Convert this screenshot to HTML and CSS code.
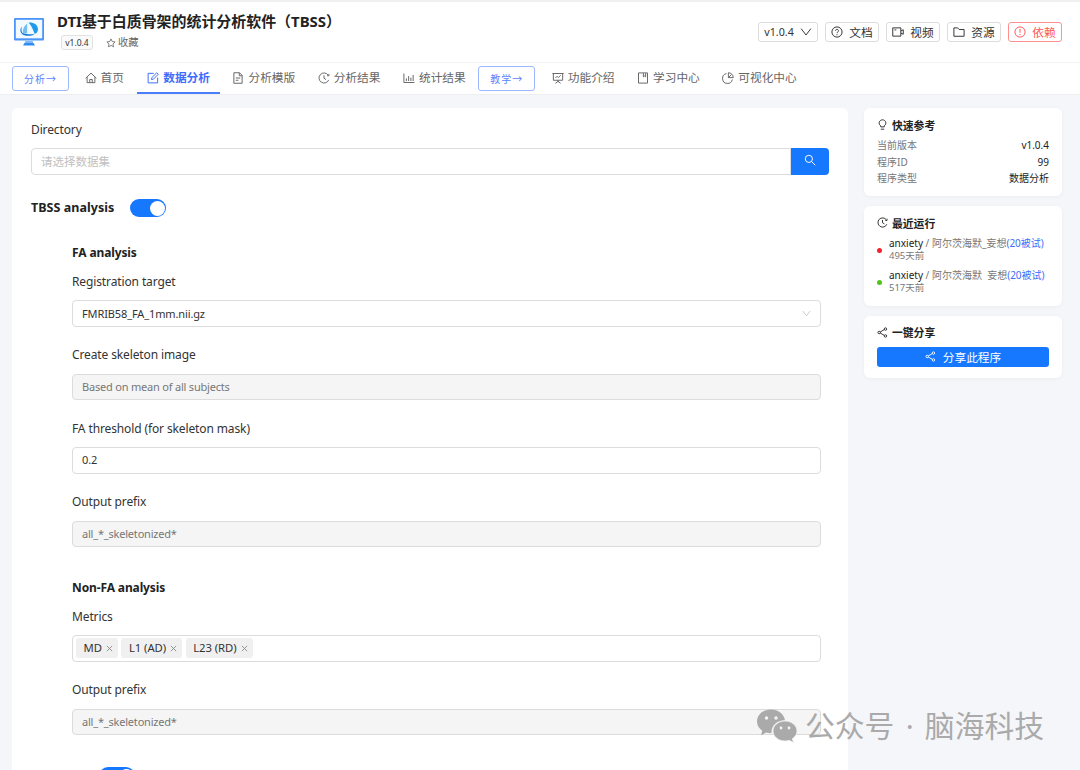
FILE: index.html
```html
<!DOCTYPE html>
<html lang="zh-CN">
<head>
  <meta charset="UTF-8">
  <meta name="viewport" content="width=device-width, initial-scale=1.0">
  <title>DTI基于白质骨架的统计分析软件（TBSS）</title>
  <link rel="stylesheet" href="styles.css">
</head>
<body>
  <!-- Shared icons -->
  <svg class="sprite">
    <symbol id="clock" viewBox="0 0 16 16"><path d="M13.600 4.200A6.700 6.700 0 1 0 14.300 10.500M14.600 2.500v2.500h-2.500M8 4.300V8.300l2.700 1.800"/></symbol>
    <symbol id="share" viewBox="0 0 16 16"><path d="M4.8 7.2l5.7-3.4M4.8 8.8l5.7 3.4"/><circle cx="3.2" cy="8" r="1.8"/><circle cx="12.3" cy="3" r="1.8"/><circle cx="12.3" cy="13" r="1.8"/></symbol>
    <symbol id="down" viewBox="0 0 16 16"><path d="M1.500 3.500L8 12l6.500-8.500"/></symbol>
    <symbol id="close" viewBox="0 0 16 16"><path d="M2 2l12 12M14 2L2 14"/></symbol>
  </svg>

  <!-- Header -->
  <header class="header">
    <svg class="logo" viewBox="0 0 32 30">
      <path d="M10 28.500h12l-1.500-2.500h-9z" fill="#2f8bf0"/>
      <path d="M12.500 24h7l1 2h-9z" fill="#7db8f8"/>
      <rect x="1" y="1" width="30" height="22.500" rx="1" fill="#4b95f8"/>
      <rect x="2.800" y="2.800" width="26.400" height="18.500" fill="#f2faff"/>
      <path d="M15.500 5.500c5-.5 9.500 2.300 9.500 6.700 0 2.300-1.400 3.800-3.300 4.900-1.700-4.500-3.200-8.400-6.200-11.600z" fill="#1d9bea"/>
      <path d="M14.200 6.500v9.800l-4.200 1C9.100 13 10.800 9.500 14.200 6.500z" fill="#73bff2"/>
      <path d="M8.800 9.300c-2 3-2 5.500.4 8 3.800 2.200 9.300 2 12.300-.1-4.500-.2-10.700.6-12.200-1.400-1-1.800-1-3.500-.5-6.500z" fill="#1479d8"/>
    </svg>
    <div class="title-block">
      <h1 class="title">DTI基于白质骨架的统计分析软件（TBSS）</h1>
      <div class="meta">
        <span class="version-tag">v1.0.4</span>
        <span class="favorite">
          <svg class="icon" viewBox="0 0 16 16"><path d="M8 1.500l2 4.200 4.600.6-3.400 3.200.9 4.600L8 11.900l-4.100 2.200.9-4.600L1.400 6.300 6 5.700z"/></svg>
          收藏
        </span>
      </div>
    </div>
    <div class="actions">
      <button class="btn btn-version">v1.0.4 <svg class="icon"><use href="#down"/></svg></button>
      <button class="btn"><svg class="icon" viewBox="0 0 16 16"><circle cx="8" cy="8" r="6.800"/><path d="M6 6.500c0-2.700 4-2.700 4 0C10 8 8 8 8 9.600M8 11v1.300"/></svg>文档</button>
      <button class="btn"><svg class="icon" viewBox="0 0 16 16"><path d="M1 2.500h10.800v11H1zM11.800 6.500l3.200-1.500v6l-3.200-1.500M3.300 5.200h2.500"/></svg>视频</button>
      <button class="btn"><svg class="icon" viewBox="0 0 16 16"><path d="M1.200 2.500h5l2 2.200h6.600v9H1.200z"/></svg>资源</button>
      <button class="btn btn-danger"><svg class="icon" viewBox="0 0 16 16"><circle cx="8" cy="8" r="6.800"/><path d="M8 4v5M8 10.700V12"/></svg>依赖</button>
    </div>
  </header>

  <!-- Navigation -->
  <nav class="nav">
    <span class="nav-group">分析→</span>
    <a class="nav-item home"><svg class="icon" viewBox="0 0 16 16"><path d="M.8 8.300L8 1.500l7.200 6.800M2.800 6.800v7.400h10.400V6.800M6.300 14v-4h3.400v4"/></svg>首页</a>
    <a class="nav-item active"><svg class="icon" viewBox="0 0 16 16"><path d="M9 1.800H1.500v12.700h12.700V7.500M6 10l.4-2.500L13 1l2 2-6.500 6.600z"/></svg>数据分析</a>
    <a class="nav-item"><svg class="icon" viewBox="0 0 16 16"><path d="M2.500 1h7.500l3.500 3.500V15h-11zM9.700 1v4h3.800M5 8h6M5 11h3.500"/></svg>分析模版</a>
    <a class="nav-item"><svg class="icon"><use href="#clock"/></svg>分析结果</a>
    <a class="nav-item"><svg class="icon" viewBox="0 0 16 16"><path d="M1.200 2v12h14M4.500 12V8.500M7.500 12V5.500M10.500 12V7.500M13.500 12V4"/></svg>统计结果</a>
    <span class="nav-group">教学→</span>
    <a class="nav-item"><svg class="icon" viewBox="0 0 16 16"><path d="M.5 2h15M1.800 2v9h12.400V2M8 11v2M4.500 15L8 12.500l3.500 2.500M4.500 8l2.300-2.300L8.500 7.400l3-3"/></svg>功能介绍</a>
    <a class="nav-item"><svg class="icon" viewBox="0 0 16 16"><path d="M2 1.200h12v13.600H2zM8.500 1.500v5l1.500-1.200 1.500 1.200v-5"/></svg>学习中心</a>
    <a class="nav-item"><svg class="icon" viewBox="0 0 16 16"><path d="M6 2.200A6.600 6.600 0 1 0 13.800 10M8.500 1v6.500H15A6.500 6.500 0 0 0 8.500 1zM8.500 7.500l4-4"/></svg>可视化中心</a>
  </nav>

  <div class="content">
    <!-- Form -->
    <main class="panel">
      <div class="field">
        <label class="label">Directory</label>
        <div class="search">
          <div class="input placeholder">请选择数据集</div>
          <button class="search-btn"><svg class="icon" viewBox="0 0 16 16"><circle cx="6.500" cy="6.500" r="4.800"/><path d="M10 10l5 5"/></svg></button>
        </div>
      </div>
      <div class="switch-row">
        <span class="heading switch-label">TBSS analysis</span>
        <span class="switch"></span>
      </div>

      <section class="group">
        <h2 class="heading">FA analysis</h2>
        <div class="field">
          <label class="label">Registration target</label>
          <div class="input">FMRIB58_FA_1mm.nii.gz<svg class="icon arrow"><use href="#down"/></svg></div>
        </div>
        <div class="field">
          <label class="label">Create skeleton image</label>
          <div class="input disabled">Based on mean of all subjects</div>
        </div>
        <div class="field">
          <label class="label">FA threshold (for skeleton mask)</label>
          <div class="input">0.2</div>
        </div>
        <div class="field">
          <label class="label">Output prefix</label>
          <div class="input disabled">all_*_skeletonized*</div>
        </div>
      </section>

      <section class="group">
        <h2 class="heading">Non-FA analysis</h2>
        <div class="field">
          <label class="label">Metrics</label>
          <div class="input tags">
            <span class="tag">MD<svg class="icon"><use href="#close"/></svg></span>
            <span class="tag">L1 (AD)<svg class="icon"><use href="#close"/></svg></span>
            <span class="tag">L23 (RD)<svg class="icon"><use href="#close"/></svg></span>
          </div>
        </div>
        <div class="field">
          <label class="label">Output prefix</label>
          <div class="input disabled">all_*_skeletonized*</div>
        </div>
      </section>
      <div class="switch-row next-row"><span class="switch"></span></div>
    </main>

    <!-- Sidebar -->
    <aside class="sidebar">
      <section class="card card-info">
        <h3 class="card-title"><svg class="icon" viewBox="0 0 16 16"><path d="M5.500 11.500V10C1.300 7.300 3 1.200 8 1.200S14.700 7.300 10.500 10v1.500zM5.500 14.800h5"/></svg>快速参考</h3>
        <div class="info"><span>当前版本</span><b>v1.0.4</b></div>
        <div class="info"><span>程序ID</span><b>99</b></div>
        <div class="info"><span>程序类型</span><b>数据分析</b></div>
      </section>
      <section class="card card-runs">
        <h3 class="card-title"><svg class="icon"><use href="#clock"/></svg>最近运行</h3>
        <div class="run failed">
          <div class="run-name"><b>anxiety</b> / 阿尔茨海默_妄想<a>(20被试)</a></div>
          <div class="run-time">495天前</div>
        </div>
        <div class="run done">
          <div class="run-name"><b>anxiety</b> / 阿尔茨海默&nbsp; 妄想<a>(20被试)</a></div>
          <div class="run-time">517天前</div>
        </div>
      </section>
      <section class="card card-share">
        <h3 class="card-title"><svg class="icon"><use href="#share"/></svg>一键分享</h3>
        <button class="share-btn"><svg class="icon"><use href="#share"/></svg>分享此程序</button>
      </section>
    </aside>
  </div>

  <!-- Account mark over the page corner -->
  <div class="watermark">
    <svg class="wechat" viewBox="0 0 40 33">
      <path d="M14 0C6.200 0 0 5.300 0 12c0 3.800 2 7 5.200 9.200L4 25.700l5.200-2.700c1.700.5 3.400.7 5.200.7C14.400 15.500 20 11 28 10.700 27 4.500 21.200 0 14 0z"/>
      <path class="front" d="M28 11.500c-6.700 0-12 4.500-12 10s5.300 10 12 10c1.500 0 3-.2 4.200-.7l4.300 2.200-1.200-3.800C38.200 27.400 40 24.600 40 21.500c0-5.500-5.300-10-12-10z"/>
      <g class="eyes"><circle cx="9.500" cy="8.500" r="1.700"/><circle cx="19" cy="8.500" r="1.700"/><circle cx="24" cy="18.500" r="1.400"/><circle cx="32" cy="18.500" r="1.400"/></g>
    </svg>
    <span>公众号 · 脑海科技</span>
  </div>
</body>
</html>
```
FILE: styles.css
```css
* {
  box-sizing: border-box;
}

body {
  margin: 0;
  height: 770px;
  overflow: hidden;
  display: flex;
  flex-direction: column;
  background: #f5f6fa;
  color: #333;
  font-family: "Noto Sans", "Noto Sans CJK SC", sans-serif;
  font-size: 11.7px;
}

h1, h2, h3 {
  margin: 0;
}

button {
  font-family: inherit;
  padding: 0;
}

.sprite {
  display: none;
}

.icon {
  width: 12px;
  height: 12px;
  flex: none;
  fill: none;
  stroke: currentColor;
  stroke-width: 1.3;
}

/* Header */
.header {
  height: 63px;
  flex: none;
  display: flex;
  padding: 0 18px 0 13px;
  background: #fff;
  border-top: 2px solid #f0f0f0;
  border-bottom: 1px solid #f3f3f3;
}

.logo {
  width: 32px;
  height: 30px;
  margin-top: 15px;
}

.title-block {
  margin: 9px 0 0 12px;
}

.title {
  font-size: 14.95px;
  line-height: 21px;
  font-weight: 700;
  color: #222;
  white-space: nowrap;
}

.meta {
  display: flex;
  align-items: center;
  margin: 3px 0 0 4px;
  gap: 13px;
}

.version-tag {
  width: 32px;
  height: 15px;
  line-height: 13px;
  border: 1px solid #e2e2e2;
  border-radius: 3px;
  background: #fafafa;
  font-size: 8.5px;
  text-align: center;
}

.favorite {
  display: flex;
  align-items: center;
  gap: 2px;
  font-size: 10.3px;
  line-height: 15px;
  color: #666;
}

.favorite .icon {
  width: 10px;
  height: 10px;
}

.actions {
  display: flex;
  gap: 7px;
  margin: 20px 0 0 auto;
}

.btn {
  height: 20px;
  width: 54px;
  display: flex;
  align-items: center;
  justify-content: center;
  gap: 6px;
  border: 1px solid #dcdcdc;
  border-radius: 3px;
  background: #fff;
  color: #333;
  font-size: 11.7px;
  line-height: 16px;
}

.btn-version {
  width: 60px;
  font-size: 10.7px;
}

.btn-danger {
  border-color: #ff8f91;
  color: #ff5558;
}

/* Navigation */
.nav {
  height: 32px;
  flex: none;
  display: flex;
  gap: 2.5px;
  padding-left: 12px;
  background: #fff;
  border-bottom: 1px solid #eceef2;
}

.nav-item {
  display: flex;
  align-items: center;
  gap: 4px;
  height: 31px;
  padding: 0 10px 4px;
  color: #666;
  white-space: nowrap;
}

.nav-item .icon {
  margin-top: 2px;
}

.nav-item.home {
  margin-left: -1px;
  padding-right: 10.8px;
}

.nav-item.active {
  color: #3d6dfa;
  font-weight: 700;
  border-bottom: 2px solid #4c7dfb;
  padding-bottom: 2px;
}

.nav-group {
  width: 57px;
  height: 25px;
  margin: 3px 4px 0 0;
  border: 1px solid #9db8ff;
  border-radius: 3px;
  color: #5c86fb;
  font-size: 10px;
  line-height: 23px;
  letter-spacing: 1px;
  text-align: center;
  font-family: "Noto Sans CJK SC", sans-serif;
}

/* Page body */
.content {
  flex: 1;
  min-height: 0;
  display: flex;
  align-items: flex-start;
  gap: 16px;
  padding: 13px 18px 0 12px;
}

.panel {
  flex: 1;
  height: 700px;
  padding: 13px 19.5px 0 19px;
  background: #fff;
  border-radius: 6px;
}

.label {
  display: block;
  height: 18px;
  margin-bottom: 9.5px;
  font-size: 12px;
  line-height: 18px;
  letter-spacing: -0.12px;
}

.input {
  display: flex;
  align-items: center;
  height: 26.5px;
  padding: 0 9px 1px;
  border: 1px solid #dcdcdc;
  border-radius: 4px;
  background: #fff;
  font-size: 11px;
  letter-spacing: -0.12px;
}

.placeholder {
  flex: 1;
  border-radius: 4px 0 0 4px;
  color: #bfbfbf;
  font-size: 11.5px;
  letter-spacing: 0;
}

.disabled {
  background: #f5f5f5;
  color: #777;
  letter-spacing: -0.2px;
}

.arrow {
  width: 9px;
  height: 9px;
  margin-left: auto;
  color: #bbb;
}

.search {
  display: flex;
  margin-top: -0.5px;
}

.search-btn {
  width: 38px;
  border: 0;
  border-radius: 0 4px 4px 0;
  background: #1677ff;
  color: #fff;
}

.heading {
  font-size: 12px;
  line-height: 18px;
  height: 18px;
  font-weight: 700;
  letter-spacing: -0.12px;
  color: #222;
}

.switch-label {
  font-size: 12.5px;
  letter-spacing: 0.04px;
}

.switch-row {
  display: flex;
  align-items: center;
  gap: 16px;
  height: 18px;
  margin-top: 24.5px;
}

.switch {
  width: 36px;
  height: 18px;
  padding: 1.5px;
  border-radius: 9px;
  background: #1677ff;
}

.switch::after {
  content: "";
  display: block;
  width: 15px;
  height: 15px;
  margin-left: auto;
  border-radius: 50%;
  background: #fff;
}

.group {
  display: flex;
  flex-direction: column;
  gap: 19.4px;
  margin: 27px 8px 0 41px;
}

.group .heading + .field {
  margin-top: -8.5px;
}

.group + .group {
  margin-top: 32px;
}

.next-row {
  margin: 32px 0 0 68px;
}

.tags {
  gap: 3.5px;
  padding: 0 3px 1px;
}

.tag {
  display: flex;
  align-items: center;
  gap: 4px;
  height: 20px;
  padding: 0 5px 1px 7.5px;
  border-radius: 3px;
  background: #f0f0f0;
  font-size: 11.3px;
  letter-spacing: -0.05px;
}

.tag .icon {
  width: 7px;
  height: 7px;
  margin-top: 2px;
  color: #888;
  stroke-width: 2;
}

/* Sidebar */
.sidebar {
  width: 198px;
  display: flex;
  flex-direction: column;
  gap: 10px;
}

.card {
  padding: 8px 13px 0;
  border-radius: 6px;
  background: #fff;
  box-shadow: 0 1px 4px rgba(0, 0, 0, 0.04);
}

.card-info {
  height: 88px;
}

.card-runs {
  height: 99.5px;
}

.card-share {
  height: 62.5px;
}

.card-title {
  display: flex;
  align-items: center;
  gap: 4px;
  height: 17px;
  font-size: 10.8px;
  color: #222;
}

.card-title .icon {
  width: 11px;
  height: 11px;
}

.info {
  display: flex;
  justify-content: space-between;
  height: 16.5px;
  font-size: 10px;
  line-height: 16px;
  color: #777;
}

.card-info .card-title {
  margin-bottom: 4px;
}

.info b {
  font-weight: 400;
  color: #222;
}

.run {
  position: relative;
  height: 31.5px;
  padding: 5px 0 0 12px;
  font-size: 10px;
  line-height: 14px;
  white-space: nowrap;
  color: #777;
}

.run b {
  font-weight: 400;
  color: #222;
}

.run a {
  color: #3d6dfa;
}

.run::before {
  content: "";
  position: absolute;
  left: 0;
  top: 17px;
  width: 5px;
  height: 5px;
  border-radius: 50%;
  background: #52c41a;
}

.run.failed::before {
  background: #f5222d;
}

.run-time {
  font-size: 9.5px;
  line-height: 12px;
}

.share-btn {
  width: 100%;
  height: 20px;
  margin-top: 6px;
  display: flex;
  align-items: center;
  justify-content: center;
  gap: 7px;
  border: 0;
  border-radius: 3px;
  background: #1677ff;
  color: #fff;
  font-size: 11.7px;
  line-height: 18px;
}

.share-btn .icon {
  width: 11px;
  height: 11px;
}

.watermark {
  position: absolute;
  left: 757px;
  top: 709px;
  display: flex;
  align-items: center;
  gap: 8px;
  height: 34px;
  color: #aaa;
  font-family: "Noto Sans", "Noto Sans CJK SC", sans-serif;
  font-size: 29.8px;
  line-height: 30px;
  word-spacing: 3.5px;
  white-space: nowrap;
}

.wechat {
  width: 40px;
  height: 34px;
  overflow: visible;
  fill: #aaa;
}

.front {
  stroke: #f0f0f2;
  stroke-width: 0.8;
}

.eyes {
  fill: #f5f5f5;
}
```
